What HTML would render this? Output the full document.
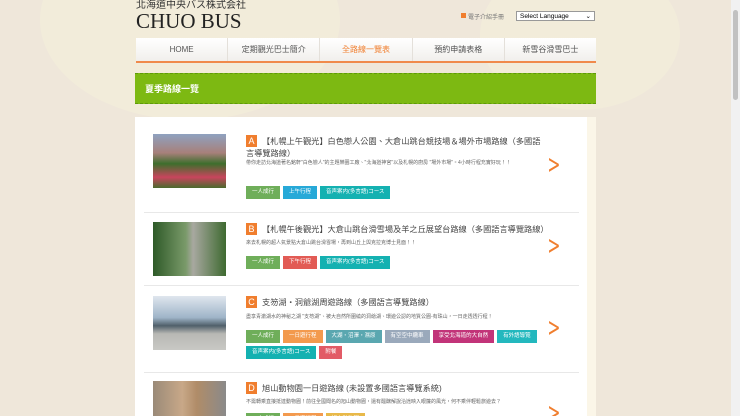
<!DOCTYPE html><html><head><meta charset="utf-8"><style>
html,body{margin:0;width:740px;height:416px;overflow:hidden}
body{background:#efe7da;font-family:"Liberation Sans","Noto Sans CJK TC",sans-serif;position:relative}
.sb{position:absolute;right:0;top:0;width:9px;height:416px;background:#f1f1f1}
.sb div{position:absolute;left:2px;top:10px;width:5px;height:90px;background:#c1c1c1;border-radius:3px}
.map{position:absolute;background:#f2ecda;border-radius:50%}
.logo1{position:absolute;left:136px;top:0;font-size:10px;line-height:11px;color:#333}
.logo2{position:absolute;left:136px;top:11px;font-family:"Liberation Serif",serif;font-size:21px;line-height:21px;color:#222}
.nav{position:absolute;left:136px;top:38px;width:460px;height:23px;background:linear-gradient(#fff,#f1efec);border-bottom:2px solid #f08a4b;display:flex}
.nav div{flex:1;text-align:center;font-size:8px;line-height:23px;color:#555;border-left:1px solid #e4e0da}
.nav div:first-child{border-left:none}
.green{position:absolute;left:135px;top:73px;width:461px;height:31px;background:#7db912;border-top:1px dashed #5e9a0a;border-bottom:1px dashed #5e9a0a;box-sizing:border-box}
.green span{position:absolute;left:10px;top:8px;color:#fff;font-size:9px;font-weight:bold}
.panel{position:absolute;left:135px;top:117px;width:452px;height:300px;background:#fff}
.strip{position:absolute;left:587px;top:117px;width:9px;height:300px;background:#fbf6e8}
.img{position:absolute;width:73px;height:54px}
.t{position:absolute;font-size:8.2px;color:#444;line-height:12px;width:300px;white-space:normal}
.t b{display:inline-block;background:#f07e2e;color:#fff;font-weight:normal;width:11px;height:12px;text-align:center;margin-right:5px;font-size:9px}
.d{position:absolute;font-size:5px;color:#666;width:298px;line-height:9px}
.tags{position:absolute;width:300px;font-size:0}
.tags span{display:inline-block;height:13px;line-height:13px;font-size:5.5px;color:#fff;padding:0 6px;margin:0 3px 3px 0}
.arr{position:absolute;font-size:26px;color:#f07e2e;font-family:"DejaVu Sans",sans-serif;transform:scaleX(.6)}
.hr{position:absolute;left:144px;width:435px;height:1px;background:#e8e8e8}
</style></head><body>
<div class="map" style="left:40px;top:-80px;width:300px;height:200px"></div>
<div class="map" style="left:480px;top:-40px;width:200px;height:150px"></div>
<div class="logo1">北海道中央バス株式会社</div>
<div class="logo2">CHUO BUS</div>
<div style="position:absolute;left:461px;top:13px;width:5px;height:5px;background:#f07e2e"></div>
<div style="position:absolute;left:468px;top:12px;font-size:6px;color:#777">電子介紹手冊</div>
<div style="position:absolute;left:516px;top:11px;width:79px;height:10px;border:1px solid #999;background:#fff;font-size:6.5px;line-height:10px;padding-left:3px;box-sizing:border-box">Select Language<span style="position:absolute;right:3px">⌄</span></div>
<div class="nav"><div>HOME</div><div>定期觀光巴士簡介</div><div style="color:#f07e2e">全路線一覽表</div><div>預約申請表格</div><div>新雪谷滑雪巴士</div></div>
<div class="green"><span>夏季路線一覽</span></div>
<div class="panel"></div><div class="strip"></div>

<div class="img" style="left:153px;top:134px;background:linear-gradient(#8fa2c0 0,#a7807a 35%,#3d6e2c 55%,#c8455d 80%,#4a6b2e)"></div>
<div class="t" style="left:246px;top:135px"><b>A</b>【札幌上午觀光】白色戀人公園、大倉山跳台競技場＆場外市場路線（多國語言導覽路線）</div>
<div class="d" style="left:246px;top:159px">帶你走訪北海道著名銘軒"白色戀人"的主題樂園工廠、"北海道神宮"以及札幌的廚房 "場外市場"。4小時行程充實好玩！！</div>
<div class="tags" style="left:246px;top:186px"><span style="background:#6fae5a">一人成行</span><span style="background:#27a9d8">上午行程</span><span style="background:#14b1b1">音声案内(多言語)コース</span></div>
<div class="arr" style="left:543px;top:150px">&gt;</div>
<div class="hr" style="top:212px"></div>

<div class="img" style="left:153px;top:222px;background:linear-gradient(90deg,#2e5a28,#7a9a6a 45%,#a8a8a0 55%,#3e6a30)"></div>
<div class="t" style="left:246px;top:223px;width:310px;white-space:nowrap"><b>B</b>【札幌午後觀光】大倉山跳台滑雪場及羊之丘展望台路線（多國語言導覽路線）</div>
<div class="d" style="left:246px;top:239px">來去札幌的超人氣景點大倉山跳台滑雪場，再到山丘上與克拉克博士見面！！</div>
<div class="tags" style="left:246px;top:256px"><span style="background:#6fae5a">一人成行</span><span style="background:#e25b55">下午行程</span><span style="background:#14b1b1">音声案内(多言語)コース</span></div>
<div class="arr" style="left:543px;top:231px">&gt;</div>
<div class="hr" style="top:285px"></div>

<div class="img" style="left:153px;top:296px;background:linear-gradient(#dfe6ee,#9fb4c8 40%,#50606a 55%,#b8b8b4 70%,#c8c8c4)"></div>
<div class="t" style="left:246px;top:296px"><b>C</b>支笏湖・洞爺湖周遊路線（多國語言導覽路線）</div>
<div class="d" style="left:246px;top:313px">盡享青澈湖水的神秘之湖 "支笏湖"、被大自然所圍繞的洞爺湖、環遊公認的地質公園-有珠山，一日走透透行程！</div>
<div class="tags" style="left:246px;top:330px;width:300px"><span style="background:#6fae5a">一人成行</span><span style="background:#f39a4e">一日遊行程</span><span style="background:#5aa7b0">大湖・沼澤・濕原</span><span style="background:#9aa9bb">有空空中纜車</span><span style="background:#c23479">享受北海道的大自然</span><span style="background:#23b8be">有外語導覽</span><span style="background:#14b1b1">音声案内(多言語)コース</span><span style="background:#e25b66">附餐</span></div>
<div class="arr" style="left:543px;top:313px">&gt;</div>
<div class="hr" style="top:372px"></div>

<div class="img" style="left:153px;top:381px;height:40px;background:linear-gradient(90deg,#9a8a78,#c8a888 40%,#b08c68 60%,#8a8a8a)"></div>
<div class="t" style="left:246px;top:382px"><b>D</b>旭山動物園一日遊路線 (未設置多國語言導覽系統)</div>
<div class="d" style="left:246px;top:398px">不需轉乘直接抵達動物園！前往全國聞名的旭山動物園，還有醞醸解說沿途映入眼簾的風光，何不乘伴輕鬆旅遊去？</div>
<div class="tags" style="left:246px;top:413px"><span style="background:#6fae5a">一人成行</span><span style="background:#f39a4e">一日遊行程</span><span style="background:#e8b94a">旭山動物園</span></div>
<div class="arr" style="left:543px;top:398px">&gt;</div>
<div class="sb"><div></div></div>
</body></html>
